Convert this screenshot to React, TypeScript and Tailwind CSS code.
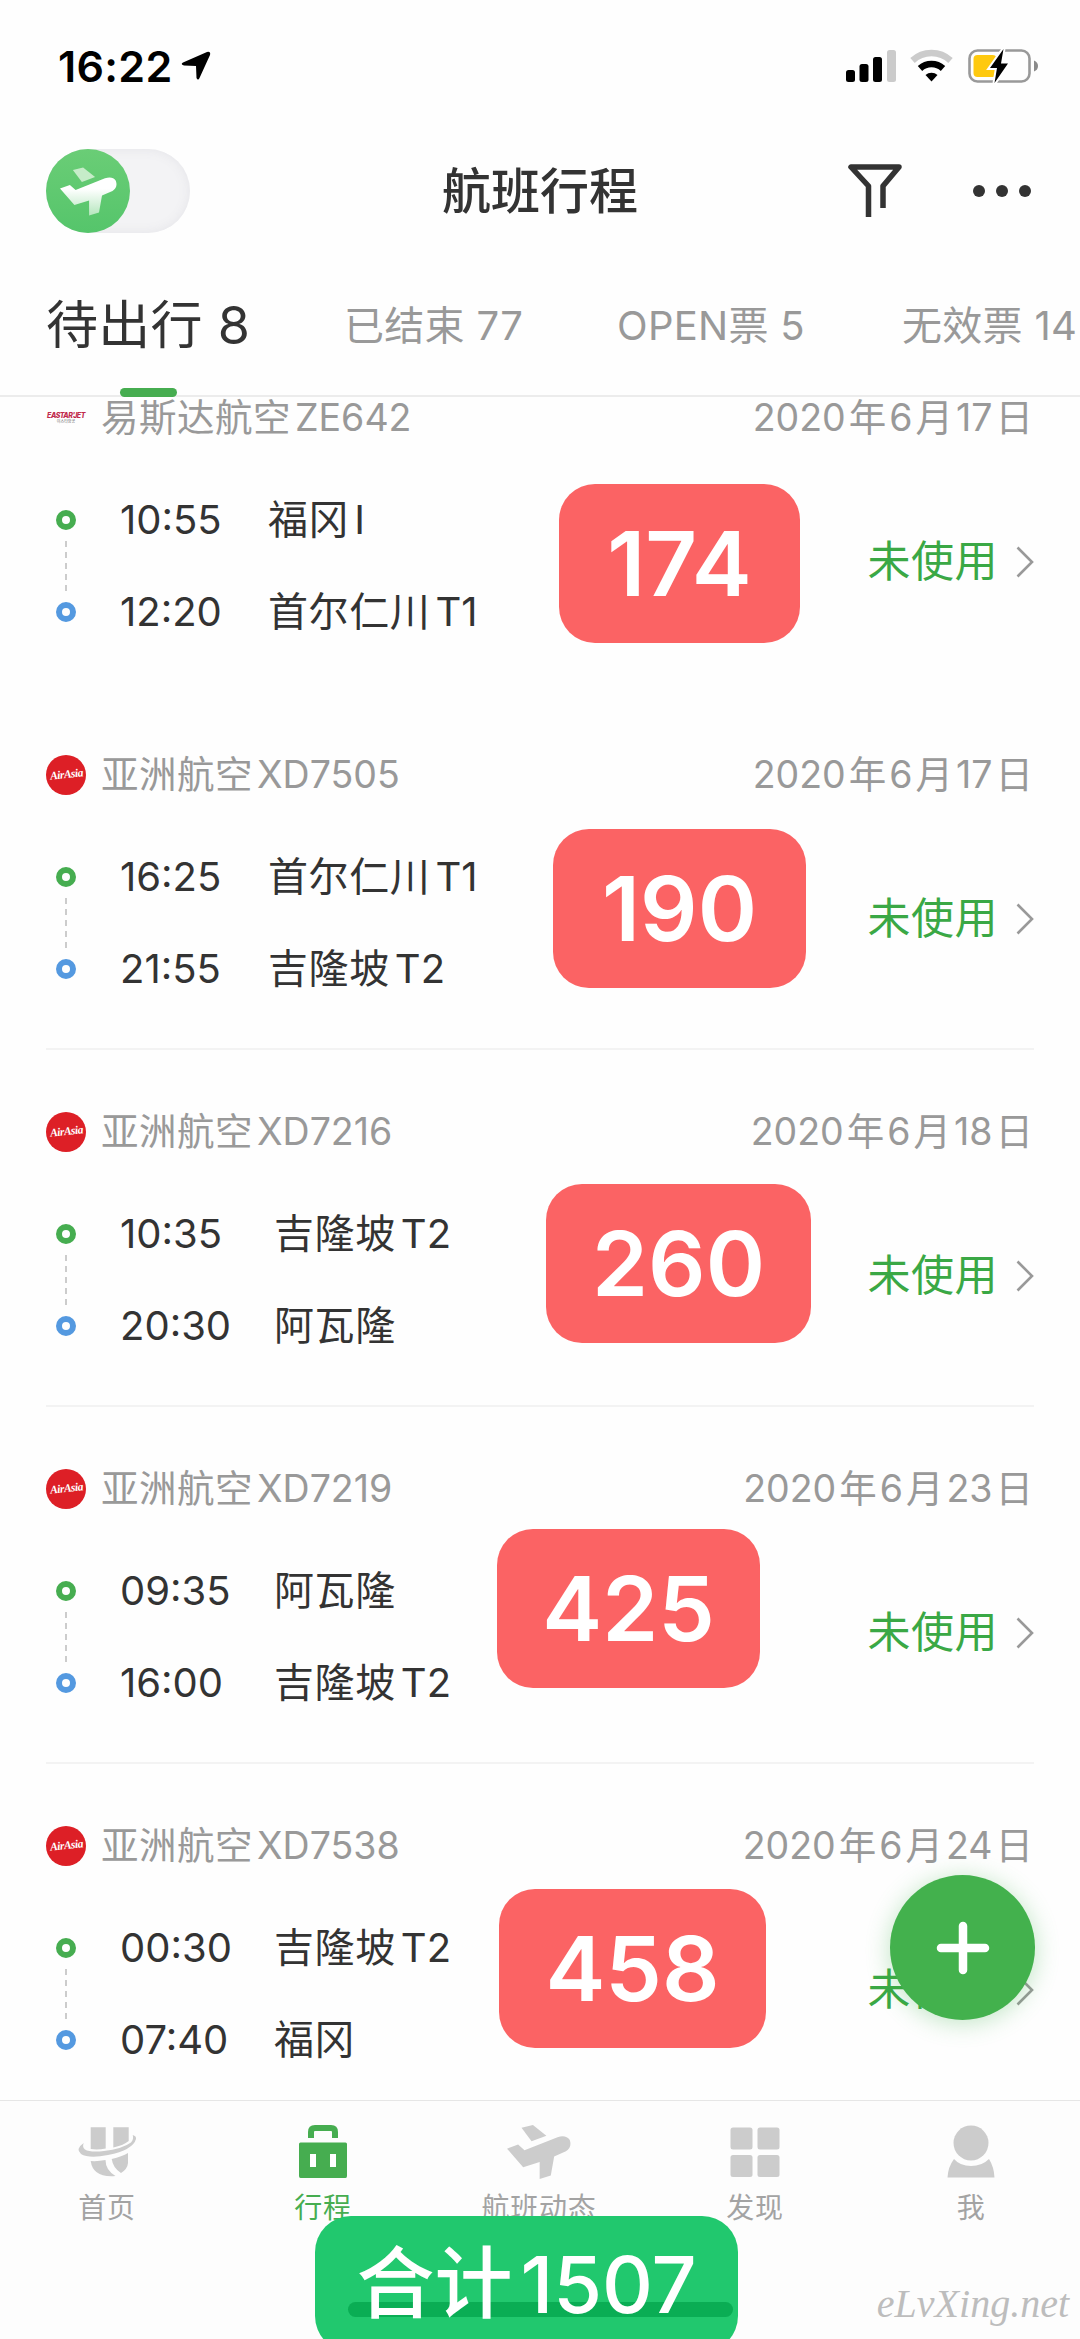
import React from 'react';

type Flight = {
  airline: string;
  code: string;
  date: string[];
  logo: 'eastar' | 'airasia';
  from: { time: string; city: string; terminal?: string };
  to: { time: string; city: string; terminal?: string };
  days: string;
  divider: boolean;
  timeWidth: string;
  badge: string;
};

const flights: Flight[] = [
  {
    airline: '易斯达航空',
    code: 'ZE642',
    date: ['2020', '年', '6', '月', '17', '日'],
    logo: 'eastar',
    from: { time: '10:55', city: '福冈', terminal: 'I' },
    to: { time: '12:20', city: '首尔仁川', terminal: 'T1' },
    days: '174',
    divider: false,
    timeWidth: 'w-[148px]',
    badge: 'left-[559px] top-[86px] w-[241px]',
  },
  {
    airline: '亚洲航空',
    code: 'XD7505',
    date: ['2020', '年', '6', '月', '17', '日'],
    logo: 'airasia',
    from: { time: '16:25', city: '首尔仁川', terminal: 'T1' },
    to: { time: '21:55', city: '吉隆坡', terminal: 'T2' },
    days: '190',
    divider: true,
    timeWidth: 'w-[148px]',
    badge: 'left-[553px] top-[74px] w-[253px]',
  },
  {
    airline: '亚洲航空',
    code: 'XD7216',
    date: ['2020', '年', '6', '月', '18', '日'],
    logo: 'airasia',
    from: { time: '10:35', city: '吉隆坡', terminal: 'T2' },
    to: { time: '20:30', city: '阿瓦隆' },
    days: '260',
    divider: true,
    timeWidth: 'w-[154px]',
    badge: 'left-[546px] top-[72px] w-[265px]',
  },
  {
    airline: '亚洲航空',
    code: 'XD7219',
    date: ['2020', '年', '6', '月', '23', '日'],
    logo: 'airasia',
    from: { time: '09:35', city: '阿瓦隆' },
    to: { time: '16:00', city: '吉隆坡', terminal: 'T2' },
    days: '425',
    divider: true,
    timeWidth: 'w-[154px]',
    badge: 'left-[497px] top-[60px] w-[263px]',
  },
  {
    airline: '亚洲航空',
    code: 'XD7538',
    date: ['2020', '年', '6', '月', '24', '日'],
    logo: 'airasia',
    from: { time: '00:30', city: '吉隆坡', terminal: 'T2' },
    to: { time: '07:40', city: '福冈' },
    days: '458',
    divider: false,
    timeWidth: 'w-[154px]',
    badge: 'left-[499px] top-[63px] w-[267px]',
  },
];

const StatusBar: React.FC = () => (
  <div className="flex h-[132px] items-center justify-between pl-[58px] pr-[41px]">
    <div className="flex items-center gap-[9px]">
      <span className="text-[43px] font-semibold leading-none tracking-[0.3px] text-black">16:22</span>
      <svg width="30" height="30" viewBox="0 0 30 30">
        <path d="M26 1 Q30 0 29 4 L18.500 27 Q17 30 15.500 27 L15 15 L3 14.500 Q-1 13.500 2 11.500 Z" fill="#000" />
      </svg>
    </div>
    <div className="flex items-center">
      <svg width="51" height="34" viewBox="0 0 51 34">
        <rect x="0" y="21" width="9" height="12" rx="2.500" />
        <rect x="13.500" y="15" width="9" height="18" rx="2.500" />
        <rect x="27" y="8" width="9" height="25" rx="2.500" />
        <rect x="41" y="1" width="9" height="32" rx="2.500" fill="#cbcbcb" />
      </svg>
      <svg width="43" height="34" viewBox="0 0 43 34" fill="none" className="ml-[13px]">
        <path d="M2.500 11.500 A28 28 0 0 1 40.500 11.500" stroke="#cbcbcb" strokeWidth="6.500" />
        <path d="M10 19.500 A17 17 0 0 1 33 19.500" stroke="#000" strokeWidth="6.500" />
        <path d="M15.500 26 A9 9 0 0 1 27.500 26 L21.500 32.500 Z" fill="#000" />
      </svg>
      <svg width="72" height="36" viewBox="0 0 72 36" className="ml-[14px]">
        <rect x="2.500" y="2.500" width="60" height="31" rx="8" fill="none" stroke="#999" strokeWidth="2.600" />
        <path d="M67 12.500 Q71 14 71 18 Q71 22 67 23.500 Z" fill="#8a8a8a" />
        <rect x="6.500" y="7" width="23" height="22" rx="4" fill="#fec90f" />
        <path d="M36.500 1 L23 20 H30 L27.500 35 L41 15.500 H34 Z" fill="#000" stroke="#fff" strokeWidth="4" paintOrder="stroke" />
      </svg>
    </div>
  </div>
);

const PlaneShape: React.FC<{ fill: string; wing?: string }> = ({ fill, wing }) => (
  <>
    <path d="M43 8 L77 0 L117 32 L73 48 Z" fill={wing || fill} />
    <path
      d="M0 70 L33 58 L52 75 L150 36 Q175 28 186 44 Q194 66 175 78 L140 93 L130 150 L97 160 V110 L48 125 Z"
      fill={fill}
    />
  </>
);

const TitleBar: React.FC = () => (
  <div className="flex h-[118px] items-center pl-[46px] pr-[48px]">
    <div className="flex h-[84px] w-[144px] items-center rounded-full bg-[#f3f3f5] shadow-[inset_0_0_12px_#e4e4e8]">
      <div className="flex h-[84px] w-[84px] items-center justify-center rounded-full bg-linear-to-b from-[#6acd76] to-[#55c56b]">
        <svg width="57" height="49" viewBox="0 0 190 160">
          <defs>
            <linearGradient id="plane" x1="0" y1="0" x2="0" y2="1">
              <stop offset="0.300" stopColor="#fff" />
              <stop offset="1" stopColor="#b5e6bd" />
            </linearGradient>
          </defs>
          <PlaneShape fill="url(#plane)" wing="#c6ecc9" />
        </svg>
      </div>
    </div>
    <h1 className="flex-1 pl-[43px] text-center text-[49px] font-medium leading-none text-[#333]">航班行程</h1>
    <svg width="56" height="56" viewBox="0 0 56 56" fill="none" stroke="#333" strokeWidth="5.500" strokeLinejoin="round">
      <path d="M21.500 54 V23 L4 4 H52 L36 23 V45" />
    </svg>
    <svg width="60" height="14" viewBox="0 0 60 14" fill="#333" className="ml-[69px]">
      <circle cx="7" cy="7" r="6" />
      <circle cx="30" cy="7" r="6" />
      <circle cx="53" cy="7" r="6" />
    </svg>
  </div>
);

const Tabs: React.FC = () => (
  <div className="relative flex h-[147px] items-center whitespace-nowrap border-b-2 border-[#ececec] pt-[6px] text-[40px] tracking-[0.3px] text-[#999]">
    <span className="w-[298px] pl-[46px] text-[52px] text-[#333]">待出行 8</span>
    <span className="w-[273px] pl-[46px]">已结束 77</span>
    <span className="w-[285px] pl-[46px]">OPEN票 5</span>
    <span className="pl-[46px]">无效票 14</span>
    <i className="absolute bottom-[-2px] left-[120px] h-[9px] w-[57px] rounded-full bg-[#46ad50]" />
  </div>
);

const Logo: React.FC<{ kind: Flight['logo'] }> = ({ kind }) => {
  if (kind === 'eastar') {
    return (
      <div className="flex h-10 w-10 flex-col items-center justify-center whitespace-nowrap leading-none">
        <span className="text-[7px] font-extrabold italic tracking-[-0.5px] text-[#c02a4c]">EASTAR'JET</span>
        <span className="mt-px text-[4px] text-[#666]">이스타항공</span>
      </div>
    );
  }
  return (
    <div className="flex h-10 w-10 items-center justify-center rounded-full bg-[#dd1f26]">
      <span className="-rotate-6 whitespace-nowrap font-['Liberation_Serif',serif] text-[11.5px] font-bold italic leading-none tracking-[-0.5px] text-white">
        AirAsia
      </span>
    </div>
  );
};

const Stop: React.FC<{ stop: Flight['from']; width: string }> = ({ stop, width }) => (
  <div className="flex h-[92px] items-center">
    <span className={width}>{stop.time}</span>
    <span className="tracking-[0.6px]">{stop.city}</span>
    {stop.terminal && <span className="ml-[5px]">{stop.terminal}</span>}
  </div>
);

const FlightCard: React.FC<{ flight: Flight }> = ({ flight }) => (
  <div className="relative h-[357px] shrink-0 px-[46px]">
    <div className="flex h-[40px] items-center text-[37.5px] text-[#999]">
      <Logo kind={flight.logo} />
      <span className="ml-[15px] tracking-[0.5px]">{flight.airline}</span>
      <span className="ml-[4px] flex-1">{flight.code}</span>
      <span className="flex gap-[3px] pr-px">
        {flight.date.map((part) => (
          <span key={part}>{part}</span>
        ))}
      </span>
    </div>
    <div className="mt-[36px] flex h-[184px] text-[40px] text-[#333]">
      <div className="flex w-[40px] flex-col items-center pt-[36px]">
        <i className="h-5 w-5 rounded-full border-[6px] border-[#46ad50]" />
        <i className="my-[11px] h-[50px] border-l-2 border-dashed border-[#ccc]" />
        <i className="h-5 w-5 rounded-full border-[6px] border-[#5499e0]" />
      </div>
      <div className="flex flex-1 flex-col pl-[34px]">
        <Stop stop={flight.from} width={flight.timeWidth} />
        <Stop stop={flight.to} width={flight.timeWidth} />
      </div>
      <div className="flex items-center pb-[9px] text-[43px] text-[#3aa845]">
        <span className="tracking-[0.5px]">未使用</span>
        <svg width="18" height="32" viewBox="0 0 18 32" fill="none" stroke="#999" strokeWidth="2.600" className="ml-[18px]">
          <path d="M1.500 1.500 L16 16 L1.500 30.500" />
        </svg>
      </div>
    </div>
    {flight.divider && <div className="mt-[33px] h-[2px] bg-[#f3f3f3]" />}
    <div
      className={`absolute flex h-[159px] items-center justify-center rounded-[36px] bg-[#fb6364] text-[90px] font-semibold text-white ${flight.badge}`}
    >
      {flight.days}
    </div>
  </div>
);

const navItems = [
  {
    label: '首页',
    active: false,
    icon: (
      <svg width="64" height="54" viewBox="-2 0 64 54" fill="#ccc">
        <path d="M13.700 2.300 H28.700 V23.500 Q21 25 13.700 24 Z M36.300 2.300 H51.700 V16 Q46 20.500 36.300 22.500 Z" />
        <path d="M13.700 36 Q21 36.500 28.500 35 Q28.500 45 38.500 51 Q16 53 13.700 36 Z M34.700 34 Q45 31.500 51 28 V38 Q50.500 44 44 48 Q36 43 34.700 34 Z" />
        <path d="M6.700 18 Q-2 24 4 29 Q12 34 31 30 Q56 25 59 14 Q59.500 11 55.700 10 Q57 14 54 17.500 Q45 24 27 26 Q13 27.500 8 24.500 Q5 22 6.700 18 Z" />
      </svg>
    ),
  },
  {
    label: '行程',
    active: true,
    icon: (
      <svg width="50" height="54" viewBox="0 0 50 54">
        <path d="M13 13 V7 Q13 3 17 3 H33 Q37 3 37 7 V13" fill="none" stroke="#46ad50" strokeWidth="6" />
        <path d="M2.500 17.500 H47.500 Q49 17.500 49 19 V51 Q49 53 47.500 53 H2.500 Q1 53 1 51 V19 Q1 17.500 2.500 17.500 Z" fill="#46ad50" />
        <path d="M12 29 H18 V42 H12 Z M32 29 H38 V42 H32 Z" fill="#fff" />
      </svg>
    ),
  },
  {
    label: '航班动态',
    active: false,
    icon: (
      <svg width="64" height="54" viewBox="0 0 190 160">
        <PlaneShape fill="#ccc" />
      </svg>
    ),
  },
  {
    label: '发现',
    active: false,
    icon: (
      <svg width="50" height="54" viewBox="0 0 50 54" fill="#ccc">
        <rect x="0.500" y="2.500" width="22" height="22" rx="2.500" />
        <rect x="27.500" y="2.500" width="22" height="22" rx="2.500" />
        <rect x="0.500" y="30" width="22" height="22" rx="2.500" />
        <rect x="27.500" y="30" width="22" height="22" rx="2.500" />
      </svg>
    ),
  },
  {
    label: '我',
    active: false,
    icon: (
      <svg width="48" height="54" viewBox="0 0 48 54" fill="#ccc">
        <circle cx="24" cy="18" r="17.500" />
        <path d="M7 34 Q13 41 24 41 Q35 41 42 34 Q47 42 47.500 52.500 H0.500 Q1 42 7 34 Z" />
      </svg>
    ),
  },
];

const BottomNav: React.FC = () => (
  <nav className="relative flex h-[239px] shrink-0 border-t border-[#e6e6e6] bg-[#fdfdfd]">
    {navItems.map((item) => (
      <div key={item.label} className="flex flex-1 flex-col items-center pr-[2px] pt-[24px]">
        {item.icon}
        <span
          className={`mt-[15px] text-[28px] tracking-[0.7px] ${item.active ? 'text-[#46ad50]' : 'text-[#a3a3a3]'}`}
        >
          {item.label}
        </span>
      </div>
    ))}
    <div className="absolute left-[315px] top-[115px] flex h-[136px] w-[423px] items-center justify-center rounded-[36px] bg-[#21c86e]">
      <i className="absolute left-[33px] top-[86px] h-[15px] w-[385px] rounded-full bg-[#0aad54]" />
      <span className="relative text-[78px] font-medium text-white">合计</span>
      <span className="relative ml-[8px] text-[79px] font-medium text-white">1507</span>
    </div>
    <span className="absolute right-[11px] top-[183px] font-['Liberation_Serif',serif] text-[40px] italic leading-none text-[#bdbdbd]">
      eLvXing.net
    </span>
  </nav>
);

export default function App() {
  return (
    <div className="relative flex h-[2339px] w-[1080px] flex-col overflow-hidden bg-[#fefefe] font-['Inter','Noto_Sans_CJK_SC',sans-serif] leading-none">
      <StatusBar />
      <TitleBar />
      <Tabs />
      <main className="flex min-h-0 flex-1 flex-col pt-px">
        {flights.map((flight) => (
          <FlightCard key={flight.code} flight={flight} />
        ))}
      </main>
      <BottomNav />
      <button className="absolute left-[890px] top-[1875px] flex h-[145px] w-[145px] items-center justify-center rounded-full bg-[#43b14d] shadow-[0_3px_24px_#43b14d55]">
        <svg width="54" height="54" viewBox="0 0 54 54" stroke="#fff" strokeWidth="8.500" strokeLinecap="round">
          <path d="M27 5 V49 M5 27 H49" />
        </svg>
      </button>
    </div>
  );
}
